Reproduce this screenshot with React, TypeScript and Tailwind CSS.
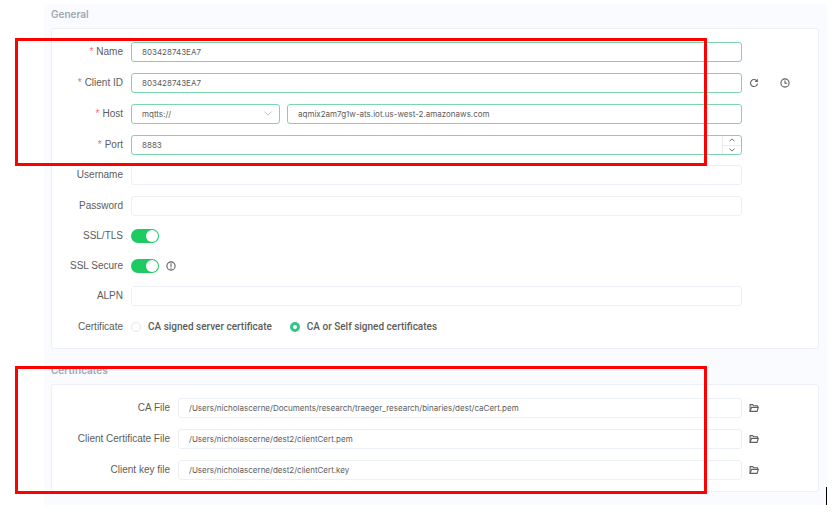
import type { InputHTMLAttributes, ReactNode } from 'react';
import clsx from 'clsx';

const certificateFiles = [
  {
    id: 'ca',
    label: 'CA File',
    path: '/Users/nicholascerne/Documents/research/traeger_research/binaries/dest/caCert.pem',
  },
  { id: 'cert', label: 'Client Certificate File', path: '/Users/nicholascerne/dest2/clientCert.pem' },
  { id: 'key', label: 'Client key file', path: '/Users/nicholascerne/dest2/clientCert.key' },
];

type RowProps = {
  label: string;
  htmlFor?: string;
  required?: boolean;
  wide?: boolean;
  aside?: ReactNode;
  children: ReactNode;
};

function Row({ label, htmlFor, required, wide, aside, children }: RowProps) {
  return (
    <div className="flex h-5 items-center">
      <label
        htmlFor={htmlFor}
        className={clsx(
          'shrink-0 text-right font-["Liberation_Sans",Arial,sans-serif] whitespace-nowrap',
          wide ? 'w-[118px]' : 'w-[71px]',
        )}
      >
        {required ? <span className="mr-[3px] text-[#f56c6c]">*</span> : null}
        {label}
      </label>
      <div className="ml-2 flex min-w-0 flex-1 items-center gap-[7px]">{children}</div>
      <div className="flex w-[76px] shrink-0 items-center gap-[21px] pl-[7px]">{aside}</div>
    </div>
  );
}

type FieldProps = InputHTMLAttributes<HTMLInputElement> & { active?: boolean };

function Field({ active, className, ...props }: FieldProps) {
  return (
    <input
      className={clsx(
        'h-5 w-full min-w-0 rounded-[3px] border bg-white px-2.5 font-[Inter,sans-serif] text-[8px] outline-none',
        active ? 'border-[#7ad7ac]' : 'border-[#edeff6]',
        className,
      )}
      {...props}
    />
  );
}

function Switch({ id }: { id: string }) {
  return (
    <input
      id={id}
      type="checkbox"
      role="switch"
      defaultChecked
      className="h-3.5 w-7 shrink-0 appearance-none rounded-full bg-[#c8cdd6] p-px before:block before:size-3 before:rounded-full before:bg-white checked:bg-[#1ecb63] checked:before:ml-3.5"
    />
  );
}

function Radio({ label, defaultChecked }: { label: string; defaultChecked?: boolean }) {
  return (
    <label className="flex items-center gap-[7px] font-medium whitespace-nowrap">
      <input
        type="radio"
        name="certificate"
        defaultChecked={defaultChecked}
        className="size-2.5 appearance-none rounded-full border border-[#e3e6ef] bg-white checked:border-[3px] checked:border-[#34c388]"
      />
      {label}
    </label>
  );
}

function IconButton({ label, children }: { label: string; children: ReactNode }) {
  return (
    <button type="button" aria-label={label} className="text-[#5f5f5f]">
      <svg viewBox="0 0 10 10" className="size-2.5" fill="none" stroke="currentColor" strokeWidth="1.1">
        {children}
      </svg>
    </button>
  );
}

function Stepper() {
  return (
    <div className="absolute inset-y-px right-px flex w-[19px] flex-col divide-y divide-[#e9ebf3] border-l border-[#e9ebf3]">
      <button type="button" aria-label="Increase port" className="flex flex-1 items-center justify-center">
        <svg viewBox="0 0 6 4" className="h-1 w-1.5" fill="none" stroke="#777" strokeWidth="1">
          <path d="M.5 3.4 3 .9l2.5 2.5" />
        </svg>
      </button>
      <button type="button" aria-label="Decrease port" className="flex flex-1 items-center justify-center">
        <svg viewBox="0 0 6 4" className="h-1 w-1.5" fill="none" stroke="#777" strokeWidth="1">
          <path d="M.5.6 3 3.1 5.5.6" />
        </svg>
      </button>
    </div>
  );
}

type SectionProps = { title: string; markerClass: string; children: ReactNode };

function Section({ title, markerClass, children }: SectionProps) {
  return (
    <section className="relative">
      <h2 className="mb-1 h-5 font-[Inter,sans-serif] leading-5 font-semibold text-[#a1a8b0]">{title}</h2>
      <div className="rounded-[3px] border border-[#edf0f6] bg-white pt-[13px] pb-[11px]">{children}</div>
      {/* red marker around the settings that have to be filled in */}
      <div
        className={clsx(
          'pointer-events-none absolute right-28 -left-9 h-32 border-3 border-[#ff0000]',
          markerClass,
        )}
      />
    </section>
  );
}

export default function App() {
  return (
    <div className="relative bg-white pt-1 pr-2.5 pb-2.5 pl-11 font-[Roboto,sans-serif] text-[10px] leading-4 text-[#5c5c5c]">
      <main className="bg-[#fafbff] pr-2 pb-[13px] pl-[7px]">
        <form className="flex flex-col gap-[11px]">
          <Section title="General" markerClass="top-[34px]">
            <div className="flex flex-col gap-[11px]">
              <Row label="Name" htmlFor="name" required>
                <Field id="name" active defaultValue="803428743EA7" />
              </Row>
              <Row
                label="Client ID"
                htmlFor="client-id"
                required
                aside={
                  <>
                    <IconButton label="Generate client ID">
                      <path d="M7.9 3A3.5 3.5 0 1 0 8.5 5.6" />
                      <path d="M8.3 1.2v2.2H6.1" />
                    </IconButton>
                    <IconButton label="Use timestamp">
                      <circle cx="5" cy="5" r="4.1" />
                      <path d="M5 2.4v2.8h2.2" />
                    </IconButton>
                  </>
                }
              >
                <Field id="client-id" active defaultValue="803428743EA7" />
              </Row>
              <Row label="Host" htmlFor="host" required>
                <div className="relative w-[149px] shrink-0">
                  <select
                    aria-label="Protocol"
                    className="block h-5 w-full appearance-none rounded-[3px] border border-[#7ad7ac] bg-white px-2.5 font-[Inter,sans-serif] text-[8px] leading-[18px] outline-none"
                  >
                    <option>mqtts://</option>
                  </select>
                  <svg
                    viewBox="0 0 8 5"
                    className="pointer-events-none absolute top-[7px] right-2 h-[5px] w-2"
                    fill="none"
                    stroke="#bcc1cb"
                    strokeWidth="1"
                  >
                    <path d="M.5.6 4 4.1 7.5.6" />
                  </svg>
                </div>
                <Field id="host" active defaultValue="aqmix2am7g1w-ats.iot.us-west-2.amazonaws.com" />
              </Row>
              <Row label="Port" htmlFor="port" required>
                <div className="relative flex-1">
                  <Field
                    id="port"
                    type="number"
                    active
                    defaultValue={8883}
                    className="block [appearance:textfield] [&::-webkit-inner-spin-button]:appearance-none"
                  />
                  <Stepper />
                </div>
              </Row>
            </div>

            <div className="mt-2.5 flex flex-col gap-[11px]">
              <Row label="Username" htmlFor="username">
                <Field id="username" />
              </Row>
              <Row label="Password" htmlFor="password">
                <Field id="password" type="password" />
              </Row>
            </div>

            <div className="mt-2.5 flex flex-col gap-2.5">
              <Row label="SSL/TLS" htmlFor="ssl">
                <Switch id="ssl" />
              </Row>
              <Row label="SSL Secure" htmlFor="ssl-secure">
                <Switch id="ssl-secure" />
                <IconButton label="About SSL Secure">
                  <circle cx="5" cy="5" r="4.1" />
                  <path d="M5 2.3v3.5M5 6.5v1.2" />
                </IconButton>
              </Row>
              <Row label="ALPN" htmlFor="alpn">
                <Field id="alpn" />
              </Row>
            </div>

            <div role="radiogroup" aria-label="Certificate" className="mt-[11px]">
              <Row label="Certificate">
                <div className="flex gap-[18px]">
                  <Radio label="CA signed server certificate" />
                  <Radio label="CA or Self signed certificates" defaultChecked />
                </div>
              </Row>
            </div>
          </Section>

          <Section title="Certificates" markerClass="top-1.5">
            <div className="flex flex-col gap-[11px]">
              {certificateFiles.map((file) => (
                <Row
                  key={file.id}
                  label={file.label}
                  htmlFor={file.id}
                  wide
                  aside={
                    <IconButton label={`Browse ${file.label}`}>
                      <path d="M1.1 8.4V1.6h2.6l1 1.2h3.7v1.5" />
                      <path d="M1.1 8.4h7L9.3 4.4H2.6L1.1 8.4Z" />
                    </IconButton>
                  }
                >
                  <Field id={file.id} defaultValue={file.path} />
                </Row>
              ))}
            </div>
          </Section>
        </form>
      </main>
      {/* text caret after the panel */}
      <div className="absolute right-2.5 bottom-2.5 h-[18px] w-px bg-black" />
    </div>
  );
}
